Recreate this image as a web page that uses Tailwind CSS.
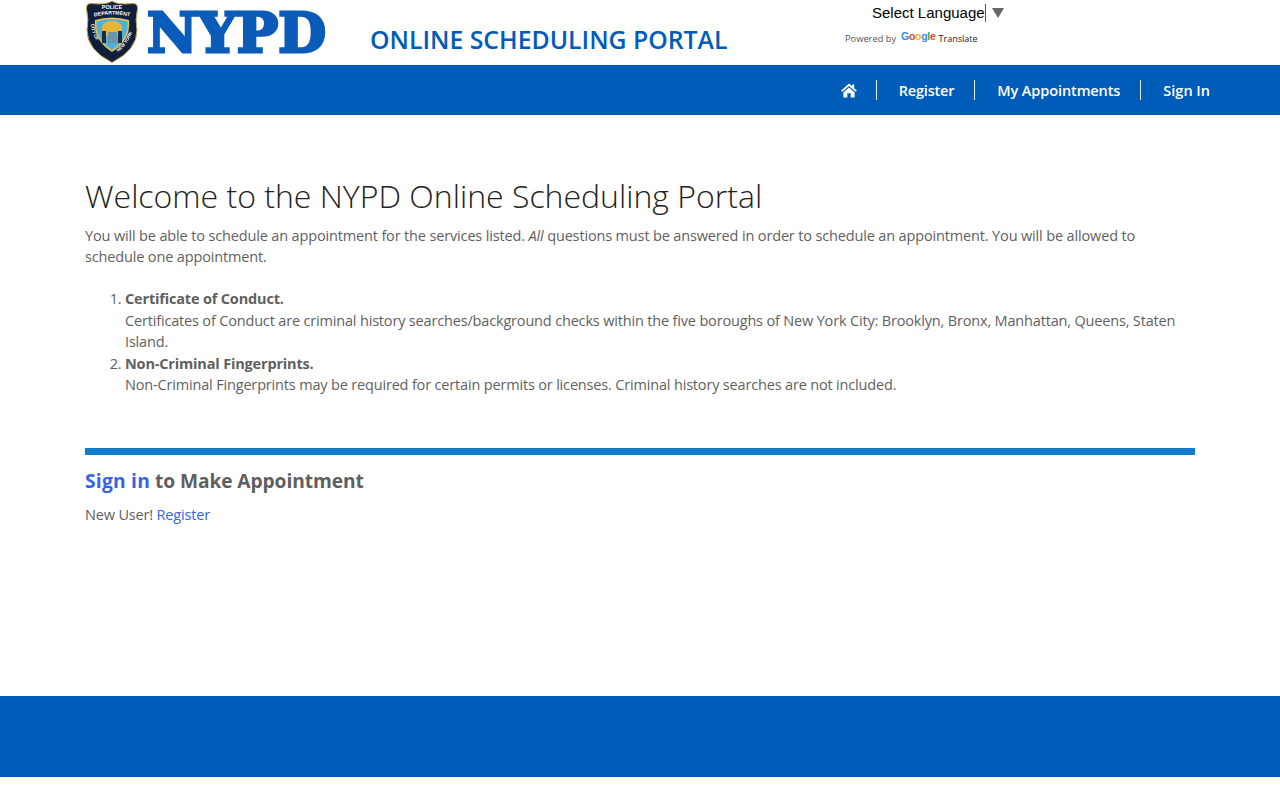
<!doctype html>
<html>
  <head>
    <title>NYPD Online Scheduling Portal</title>
    <meta charset="UTF-8" />
    <script src="https://cdn.jsdelivr.net/npm/@tailwindcss/browser@4"></script>
  </head>
  <body class="bg-white font-['Open_Sans',sans-serif] text-[#5f5f5f]">
    <header class="h-[65px] bg-white flex pl-[85px]">
      <svg width="245" height="64" viewBox="0 0 245 64" class="shrink-0">
        <path d="M6 3.500 Q22 5 27 1 Q32 5 48 3.500 Q53 3.500 52.500 9 Q50 20 52 30 Q52 50 27 62.500 Q2 50 2 30 Q4 20 1.500 9 Q1 3.500 6 3.500Z" fill="#10203c" stroke="#c9a64a" stroke-width="1"/>
        <path d="M10 20 Q27 15 44 20 Q46 40 27 52 Q8 40 10 20Z" fill="#e9c24f"/>
        <path d="M11.500 21.500 Q27 17 42.500 21.500 Q44 39 27 50 Q10 39 11.500 21.500Z" fill="#4fb0dc"/>
        <path d="M27 21 Q34 21 37 26 L37 36 H17 L17 26 Q20 21 27 21Z" fill="#e6b53a"/>
        <rect x="23" y="32" width="9" height="11" fill="#6a95a8"/>
        <path d="M17 31 H21 V43 H17Z M33 31 H37 V43 H33Z" fill="#1c2b45"/>
        <path id="badge-top" d="M5 17.500 Q27 11.500 49 17.500" fill="none"/>
        <text x="27" y="9.200" text-anchor="middle" font-family="Liberation Sans" font-size="5.500" font-weight="700" fill="#fff">POLICE</text>
        <text font-family="Liberation Sans" font-size="5.200" font-weight="700" fill="#fff"><textPath href="#badge-top" startOffset="50%" text-anchor="middle">DEPARTMENT</textPath></text>
        <path id="badge-left" d="M6 24 Q7 38 19 50" fill="none"/>
        <path id="badge-right" d="M33 52 Q46 42 49 24" fill="none"/>
        <text font-family="Liberation Sans" font-size="4.500" font-weight="700" fill="#fff"><textPath href="#badge-left">CITY OF</textPath></text>
        <text font-family="Liberation Sans" font-size="4.500" font-weight="700" fill="#fff"><textPath href="#badge-right">NEW YORK</textPath></text>
        <text x="62" y="51.500" font-family="DejaVu Serif" font-weight="700" font-size="55" fill="#0b5cb8" stroke="#0b5cb8" stroke-width="3" stroke-linejoin="miter" textLength="179" lengthAdjust="spacingAndGlyphs">NYPD</text>
      </svg>
      <h1 class="ml-[40px] mt-[22px] w-[357px] text-[24.8px] leading-[34px] font-semibold text-[#005cb9] whitespace-nowrap">ONLINE SCHEDULING PORTAL</h1>
      <div class="ml-[118px] w-[170px] shrink-0">
        <div class="flex items-center h-[26px] pl-[27px] font-['Liberation_Sans',sans-serif] text-[15px] text-black">
          <span class="border-r border-[#555] leading-[18px] whitespace-nowrap">Select Language</span>
          <svg width="12" height="10" viewBox="0 0 12 10" class="ml-[6px]"><path d="M0 0H12L6 10Z" fill="#666"/></svg>
        </div>
        <div class="flex items-center h-[25px] text-[9.3px] whitespace-nowrap">
          <span class="text-[#555]">Powered by</span>
          <span class="ml-[5px] -mt-[3px] font-['Liberation_Sans',sans-serif] text-[10.5px] font-bold tracking-[-0.3px]"><span class="text-[#4285f4]">G</span><span class="text-[#ea4335]">o</span><span class="text-[#fbbc05]">o</span><span class="text-[#4285f4]">g</span><span class="text-[#34a853]">l</span><span class="text-[#ea4335]">e</span></span>
          <span class="ml-[3px] text-[9px] text-[#222]">Translate</span>
        </div>
      </div>
    </header>

    <nav class="h-[50px] bg-[#005cb9] flex items-center justify-end pr-[70px] text-white text-[14.5px] tracking-[-0.1px] font-semibold">
      <a class="flex items-center h-[20px] pr-[18px] border-r border-white/90">
        <svg width="18" height="15" viewBox="0 0 18 16" fill="#fff"><path d="M9 0.500 0.500 8.200 2 9.400 9 3.200 16 9.400 17.500 8.200 14.500 5.500V1.500H12.300V3.500ZM3 10V15.500H7.200V11H10.800V15.500H15V10L9 4.800Z"/></svg>
      </a>
      <a class="flex items-center h-[20px] pt-[2px] pl-[22px] pr-[20px] border-r border-white/90 tracking-[-0.2px]">Register</a>
      <a class="flex items-center h-[20px] pt-[2px] pl-[22px] pr-[20px] border-r border-white/90">My Appointments</a>
      <a class="flex items-center h-[20px] pt-[2px] pl-[22px] tracking-[0px]">Sign In</a>
    </nav>

    <main class="px-[85px]">
      <div class="w-[1110px]">
        <h2 class="mt-[59px] text-[32px] leading-[44px] font-light text-[#222] whitespace-nowrap">Welcome to the NYPD Online Scheduling Portal</h2>
        <p class="mt-[7px] max-w-[1090px] text-[14.5px] tracking-[-0.15px] leading-[21px]">You will be able to schedule an appointment for the services listed. <em>All</em> questions must be answered in order to schedule an appointment. You will be allowed to schedule one appointment.</p>
        <ol class="mt-[21px] pl-[40px] list-decimal text-[14.5px] tracking-[-0.17px] leading-[21.5px]">
          <li><strong class="font-bold">Certificate of Conduct.</strong><br />Certificates of Conduct are criminal history searches/background checks within the five boroughs of New York City: Brooklyn, Bronx, Manhattan, Queens, Staten Island.</li>
          <li><strong class="font-bold">Non-Criminal Fingerprints.</strong><br />Non-Criminal Fingerprints may be required for certain permits or licenses. Criminal history searches are not included.</li>
        </ol>
        <div class="mt-[52px] h-[7px] bg-[#0f7ccf]"></div>
        <h3 class="mt-[12px] text-[19.2px] tracking-[-0.09px] leading-[28px] font-bold"><a class="text-[#3563e9] tracking-[0.25px]">Sign in</a> to Make Appointment</h3>
        <p class="mt-[9px] text-[14.5px] tracking-[-0.17px] leading-[21px]">New User! <a class="text-[#3563e9]">Register</a></p>
      </div>
    </main>

    <footer class="mt-[171px] h-[81px] bg-[#005cb9]"></footer>
  </body>
</html>
